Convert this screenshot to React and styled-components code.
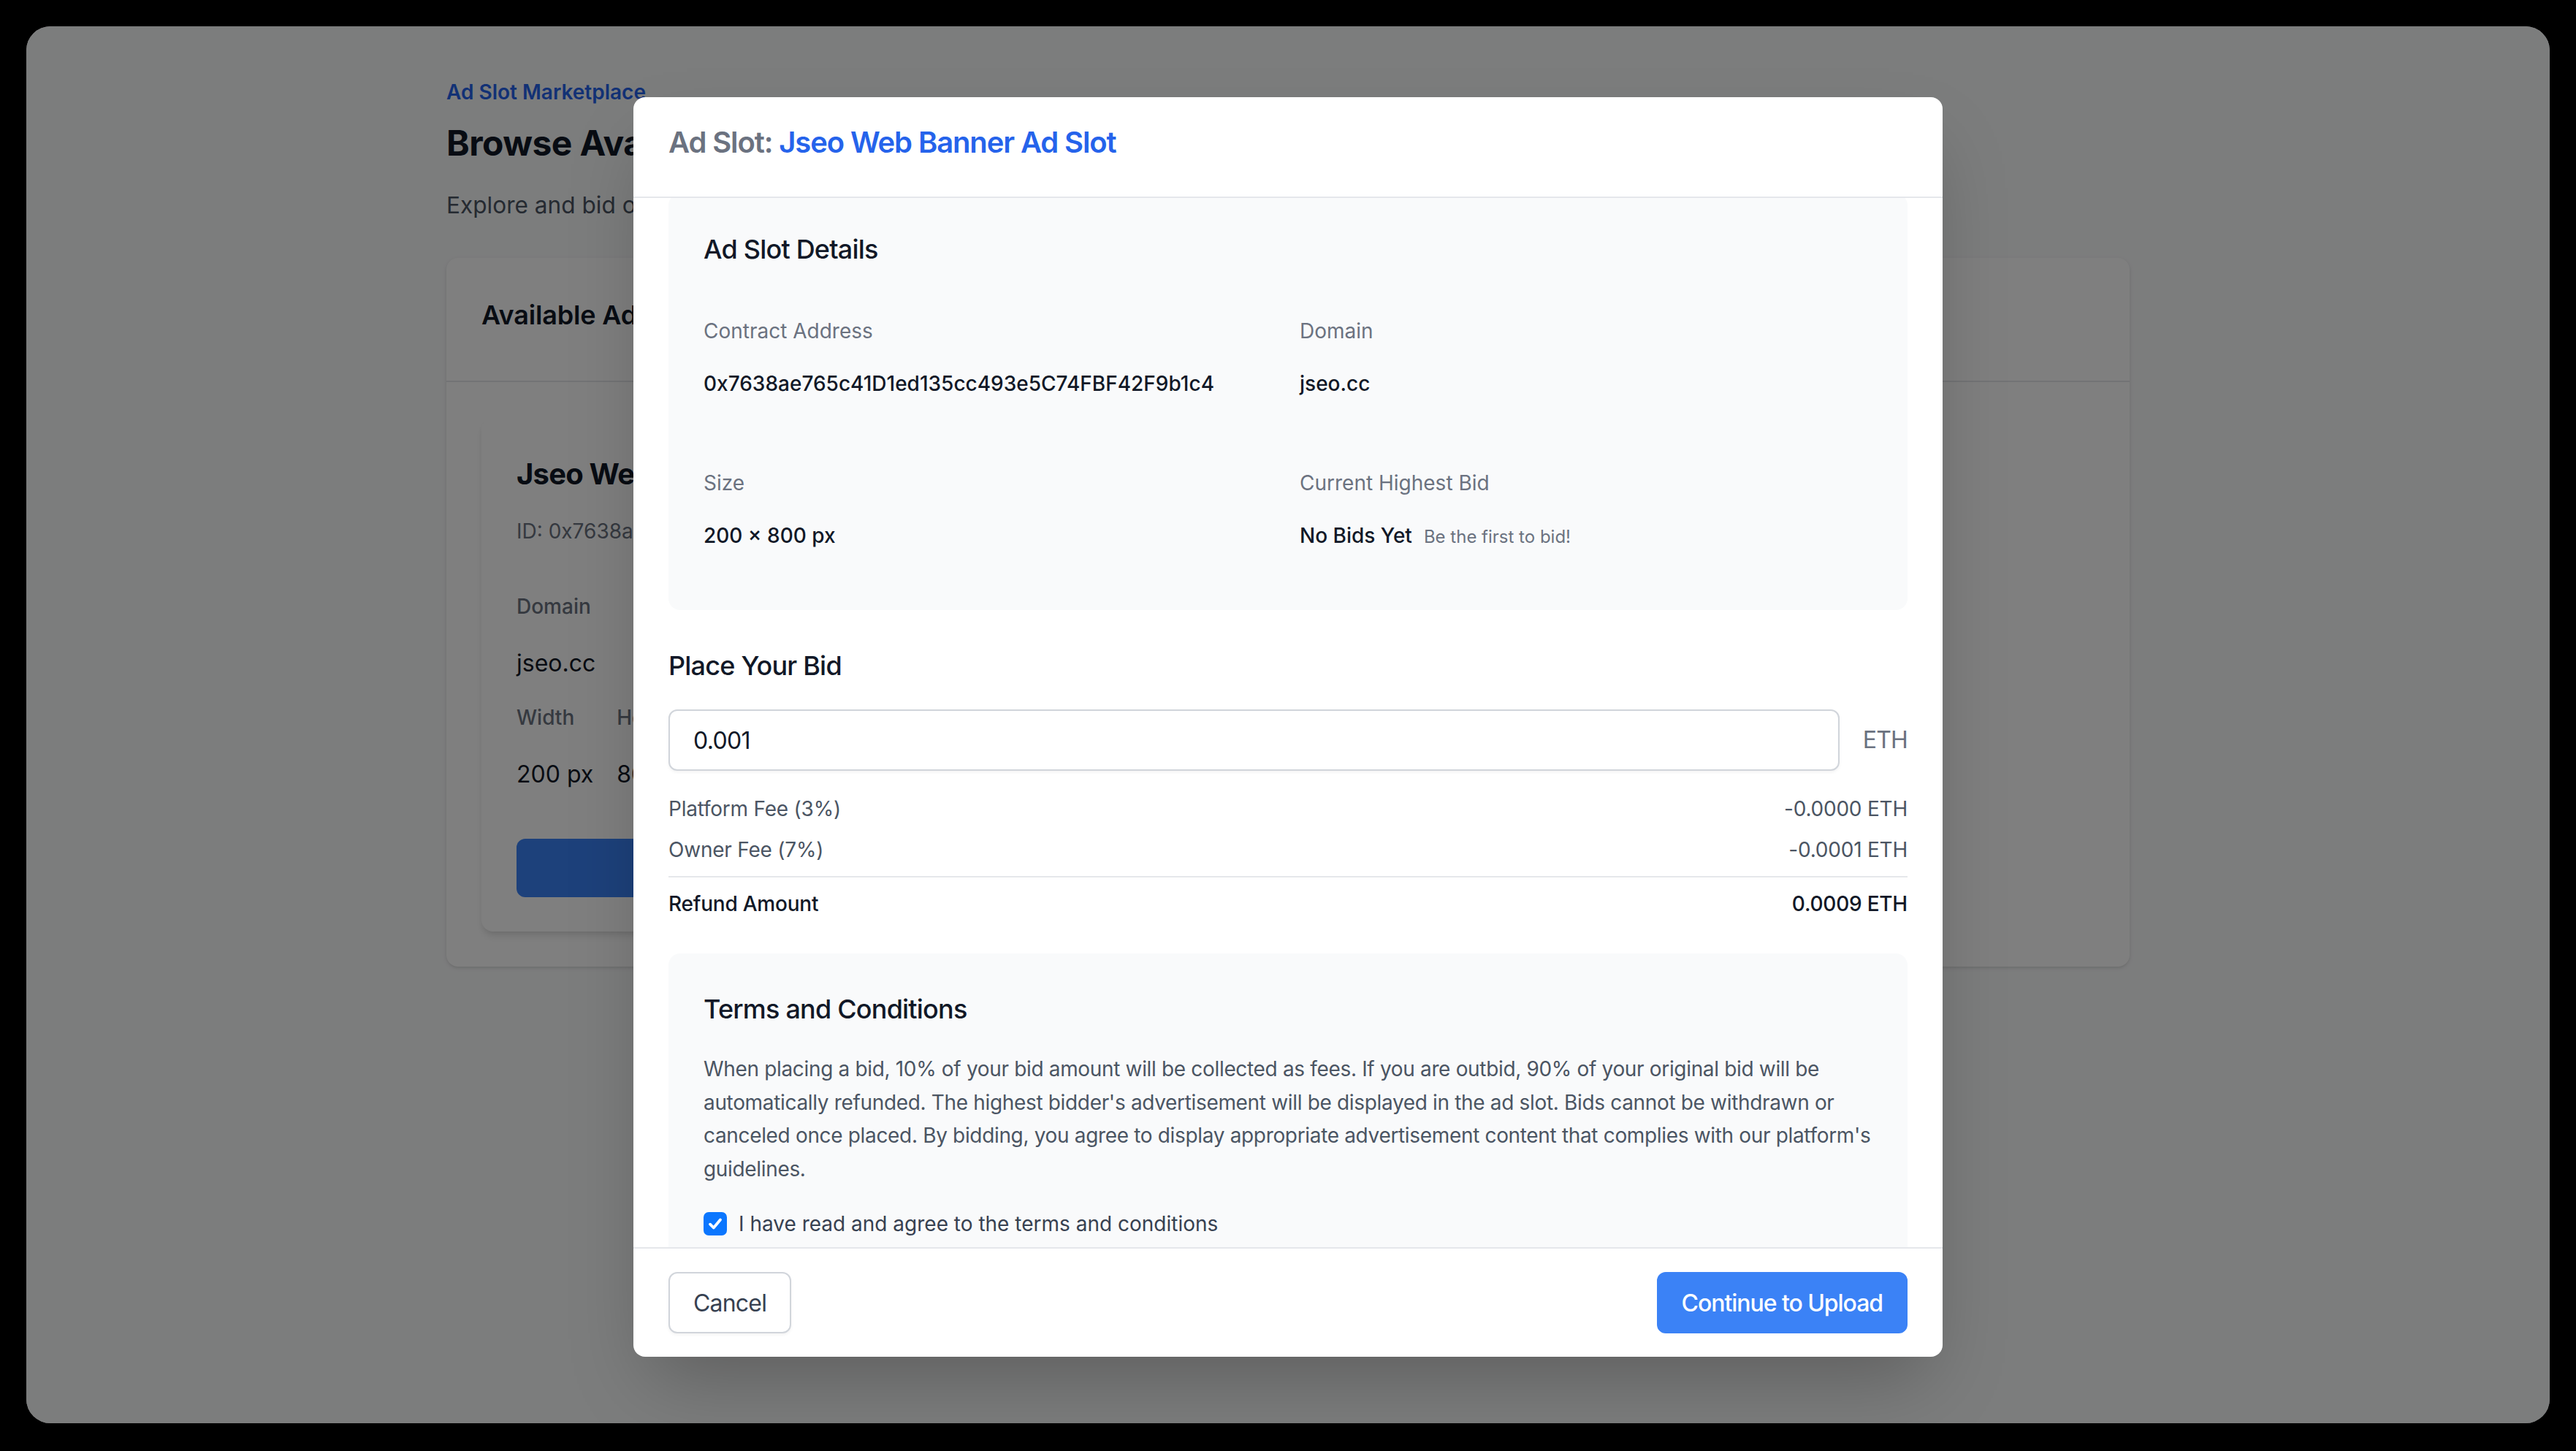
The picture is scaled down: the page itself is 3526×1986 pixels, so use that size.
import React, { useLayoutEffect, useRef } from "react";
import styled, { createGlobalStyle } from "styled-components";

const GlobalStyle = createGlobalStyle`
  html, body { margin: 0; padding: 0; background: #000; overflow: hidden; }
  body { font-family: Inter, "Noto Sans", "Liberation Sans", sans-serif; -webkit-font-smoothing: antialiased; }
  *, *::before, *::after { box-sizing: border-box; }
  h1, h2, h3, h4, p { margin: 0; }
`;

const Screen = styled.div`
  zoom: 2;
  width: 1763px;
  height: 993px;
  padding: 18px;
  background: #000;
`;

const Window = styled.div`
  position: relative;
  width: 1727px;
  height: 956px;
  border-radius: 16.5px;
  overflow: hidden;
  background: #f9fafb;
`;

/* ---------- background page ---------- */
const Page = styled.main`
  max-width: 1152px;
  margin: 0 auto;
  padding-top: 35px;
`;

const Eyebrow = styled.div`
  font-size: 14px;
  line-height: 20px;
  font-weight: 600;
  color: #2563eb;
`;

const PageTitle = styled.h1`
  margin-top: 10px;
  font-size: 24px;
  line-height: 30px;
  font-weight: 700;
  color: #111827;
  letter-spacing: -0.012em;
`;

const PageSubtitle = styled.p`
  margin-top: 15.5px;
  font-size: 15.8px;
  line-height: 24px;
  color: #4b5563;
`;

const Card = styled.section`
  margin-top: 24px;
  background: #fff;
  border-radius: 8px;
  box-shadow: 0 1px 3px rgba(0, 0, 0, 0.1), 0 1px 2px -1px rgba(0, 0, 0, 0.1);
`;

const CardHeader = styled.div`
  padding: 25px 24px 31px;
  border-bottom: 1px solid #e5e7eb;
`;

const CardTitle = styled.h2`
  font-size: 18px;
  line-height: 28px;
  font-weight: 600;
  color: #111827;
  letter-spacing: -0.005em;
`;

const CardBody = styled.div`
  padding: 24.5px 24px 24px;
  display: grid;
  grid-template-columns: repeat(3, 1fr);
  gap: 24px;
`;

const SlotCard = styled.article`
  background: #fff;
  border-radius: 8px;
  padding: 24.5px 24px 23.5px;
  box-shadow: 0 4px 6px -1px rgba(0, 0, 0, 0.1), 0 2px 4px -2px rgba(0, 0, 0, 0.1);
`;

const SlotTitle = styled.h3`
  font-size: 20px;
  line-height: 28px;
  font-weight: 700;
  color: #111827;
  letter-spacing: -0.02em;
`;

const SlotId = styled.p`
  margin-top: 15px;
  font-size: 14px;
  line-height: 20px;
  color: #6b7280;
  white-space: nowrap;
  overflow: hidden;
  text-overflow: ellipsis;
`;

const SlotLabel = styled.div`
  margin-top: ${(p) => p.$mt || 0}px;
  font-size: 14px;
  line-height: 20px;
  font-weight: 500;
  color: #6b7280;
`;

const SlotValue = styled.div`
  margin-top: 17px;
  font-size: 16px;
  line-height: 24px;
  color: #111827;
`;

const SizeRow = styled.div`
  display: flex;
  gap: 16px;
`;

const SizeCol = styled.div`
  display: flex;
  flex-direction: column;
`;

const SlotButton = styled.button`
  margin-top: 32px;
  width: 100%;
  height: 40px;
  border: 0;
  border-radius: 6px;
  background: #3b82f6;
  color: #fff;
  font: 500 16px Inter, "Noto Sans", sans-serif;
`;

/* ---------- modal ---------- */
const Overlay = styled.div`
  position: absolute;
  inset: 0;
  background: rgba(0, 0, 0, 0.5);
  display: flex;
  align-items: center;
  justify-content: center;
`;

const Modal = styled.div`
  width: 896px;
  max-height: 862px;
  margin-top: 3px;
  background: #fff;
  border-radius: 8px;
  box-shadow: 0 25px 50px -12px rgba(0, 0, 0, 0.25);
  display: flex;
  flex-direction: column;
  overflow: hidden;
`;

const ModalHeader = styled.header`
  padding: 17px 24px 23px;
  border-bottom: 1px solid #e5e7eb;
`;

const ModalTitle = styled.h3`
  font-size: 20px;
  line-height: 28px;
  font-weight: 600;
  color: #6b7280;
  letter-spacing: -0.028em;
`;

const Accent = styled.span`
  color: #2563eb;
`;

const ModalBody = styled.div`
  flex: 1;
  min-height: 0;
  overflow-y: auto;
  padding: 24px;
  display: flex;
  flex-direction: column;
  gap: 24px;
  scrollbar-width: none;
  &::-webkit-scrollbar { display: none; }
`;

const Panel = styled.section`
  flex-shrink: 0;
  background: #f9fafb;
  border-radius: 8px;
  padding: 24px;
`;

const SectionTitle = styled.h4`
  font-size: 18px;
  line-height: 28px;
  font-weight: 500;
  color: #111827;
  margin-bottom: 16px;
  letter-spacing: -0.022em;
`;

const DetailGrid = styled.div`
  display: grid;
  grid-template-columns: 1fr 1fr;
  gap: 16px;
`;

const Field = styled.div`
  padding: 16px 0;
`;

const FieldLabel = styled.div`
  font-size: 14px;
  line-height: 20px;
  color: #6b7280;
  margin-bottom: 16px;
`;

const FieldValue = styled.div`
  font-size: 14px;
  line-height: 20px;
  font-weight: 500;
  color: #111827;
  display: flex;
  align-items: baseline;
`;

const Hint = styled.span`
  margin-left: 8px;
  font-size: 12px;
  font-weight: 400;
  color: #6b7280;
`;

const BidSection = styled.section`
  flex-shrink: 0;
`;

const InputRow = styled.div`
  display: flex;
  align-items: center;
`;

const BidInput = styled.input`
  flex: 1;
  height: 42px;
  padding: 0 16px;
  border: 1px solid #d1d5db;
  border-radius: 6px;
  box-shadow: 0 1px 2px rgba(0, 0, 0, 0.05);
  font: 400 16px Inter, "Noto Sans", sans-serif;
  letter-spacing: -0.02em;
  color: #111827;
  background: #fff;
  outline: none;
`;

const Unit = styled.span`
  margin-left: 16px;
  font-size: 16px;
  line-height: 24px;
  color: #6b7280;
  letter-spacing: -0.025em;
`;

const FeeList = styled.div`
  margin-top: 16px;
  display: flex;
  flex-direction: column;
  gap: 8px;
`;

const FeeRow = styled.div`
  display: flex;
  justify-content: space-between;
  font-size: 14px;
  line-height: 20px;
  letter-spacing: -0.008em;
  color: ${(p) => (p.$total ? "#111827" : "#4b5563")};
  font-weight: ${(p) => (p.$total ? 500 : 400)};
  ${(p) => p.$total && "border-top: 1px solid #e5e7eb; padding-top: 8px;"}
`;

const Terms = styled.p`
  font-size: 14px;
  line-height: 1.625;
  color: #4b5563;
  letter-spacing: -0.012em;
`;

const CheckRow = styled.label`
  margin-top: 16px;
  display: flex;
  align-items: center;
  gap: 8px;
  font-size: 14px;
  line-height: 20px;
  color: #374151;
`;

const HiddenInput = styled.input`
  position: absolute;
  opacity: 0;
  width: 0;
  height: 0;
`;

const CheckBox = styled.span`
  width: 16px;
  height: 16px;
  border-radius: 3.5px;
  background: #0b76fe;
  display: inline-flex;
  align-items: center;
  justify-content: center;
  flex-shrink: 0;
`;

const ModalFooter = styled.footer`
  flex-shrink: 0;
  border-top: 1px solid #e5e7eb;
  padding: 16px 24px;
  display: flex;
  justify-content: space-between;
  align-items: center;
`;

const Button = styled.button`
  height: 42px;
  padding: 0 16px;
  border-radius: 6px;
  font: ${(p) => (p.$primary ? 500 : 400)} 16px Inter, "Noto Sans", sans-serif;
  letter-spacing: ${(p) => (p.$primary ? "-0.033em" : "-0.025em")};
  border: 1px solid ${(p) => (p.$primary ? "#3b82f6" : "#d1d5db")};
  background: ${(p) => (p.$primary ? "#3b82f6" : "#fff")};
  color: ${(p) => (p.$primary ? "#fff" : "#374151")};
  box-shadow: ${(p) => (p.$primary ? "none" : "0 1px 2px rgba(0,0,0,0.05)")};
`;

const fees = [
  { label: "Platform Fee (3%)", value: "-0.0000 ETH" },
  { label: "Owner Fee (7%)", value: "-0.0001 ETH" },
];

export default function App() {
  const bodyRef = useRef(null);
  useLayoutEffect(() => {
    if (bodyRef.current) bodyRef.current.scrollTop = 27;
  }, []);

  return (
    <>
      <GlobalStyle />
      <Screen>
        <Window>
          <Page>
            <Eyebrow>Ad Slot Marketplace</Eyebrow>
            <PageTitle>Browse Available Ad Slots</PageTitle>
            <PageSubtitle>Explore and bid on premium advertising spaces across the web</PageSubtitle>
            <Card>
              <CardHeader>
                <CardTitle>Available Ad Slots</CardTitle>
              </CardHeader>
              <CardBody>
                <SlotCard>
                  <SlotTitle>Jseo Web Banner Ad Slot</SlotTitle>
                  <SlotId>ID: 0x7638ae765c41D1ed135cc493e5C74FBF42F9b1c4</SlotId>
                  <SlotLabel $mt={31.5}>Domain</SlotLabel>
                  <SlotValue>jseo.cc</SlotValue>
                  <SizeRow>
                    <SizeCol>
                      <SlotLabel $mt={15}>Width</SlotLabel>
                      <SlotValue>200 px</SlotValue>
                    </SizeCol>
                    <SizeCol>
                      <SlotLabel $mt={15}>Height</SlotLabel>
                      <SlotValue>800 px</SlotValue>
                    </SizeCol>
                  </SizeRow>
                  <SlotButton>Place Bid</SlotButton>
                </SlotCard>
              </CardBody>
            </Card>
          </Page>

          <Overlay>
            <Modal>
              <ModalHeader>
                <ModalTitle>
                  Ad Slot: <Accent>Jseo Web Banner Ad Slot</Accent>
                </ModalTitle>
              </ModalHeader>

              <ModalBody ref={bodyRef}>
                <Panel>
                  <SectionTitle>Ad Slot Details</SectionTitle>
                  <DetailGrid>
                    <Field>
                      <FieldLabel>Contract Address</FieldLabel>
                      <FieldValue>0x7638ae765c41D1ed135cc493e5C74FBF42F9b1c4</FieldValue>
                    </Field>
                    <Field>
                      <FieldLabel>Domain</FieldLabel>
                      <FieldValue>jseo.cc</FieldValue>
                    </Field>
                    <Field>
                      <FieldLabel>Size</FieldLabel>
                      <FieldValue>200 × 800 px</FieldValue>
                    </Field>
                    <Field>
                      <FieldLabel>Current Highest Bid</FieldLabel>
                      <FieldValue>
                        No Bids Yet<Hint>Be the first to bid!</Hint>
                      </FieldValue>
                    </Field>
                  </DetailGrid>
                </Panel>

                <BidSection>
                  <SectionTitle>Place Your Bid</SectionTitle>
                  <InputRow>
                    <BidInput type="text" defaultValue="0.001" />
                    <Unit>ETH</Unit>
                  </InputRow>
                  <FeeList>
                    {fees.map((f) => (
                      <FeeRow key={f.label}>
                        <span>{f.label}</span>
                        <span>{f.value}</span>
                      </FeeRow>
                    ))}
                    <FeeRow $total>
                      <span>Refund Amount</span>
                      <span>0.0009 ETH</span>
                    </FeeRow>
                  </FeeList>
                </BidSection>

                <Panel>
                  <SectionTitle>Terms and Conditions</SectionTitle>
                  <Terms>
                    When placing a bid, 10% of your bid amount will be collected as fees. If you are outbid, 90% of
                    your original bid will be automatically refunded. The highest bidder's advertisement will be
                    displayed in the ad slot. Bids cannot be withdrawn or canceled once placed. By bidding, you agree
                    to display appropriate advertisement content that complies with our platform's guidelines.
                  </Terms>
                  <CheckRow>
                    <HiddenInput type="checkbox" defaultChecked />
                    <CheckBox>
                      <svg width="11" height="11" viewBox="0 0 12 12" fill="none">
                        <path d="M2.2 6.4 L4.8 9 L9.8 3" stroke="#fff" strokeWidth="2.1" strokeLinecap="round" strokeLinejoin="round" />
                      </svg>
                    </CheckBox>
                    I have read and agree to the terms and conditions
                  </CheckRow>
                </Panel>
              </ModalBody>

              <ModalFooter>
                <Button>Cancel</Button>
                <Button $primary>Continue to Upload</Button>
              </ModalFooter>
            </Modal>
          </Overlay>
        </Window>
      </Screen>
    </>
  );
}
